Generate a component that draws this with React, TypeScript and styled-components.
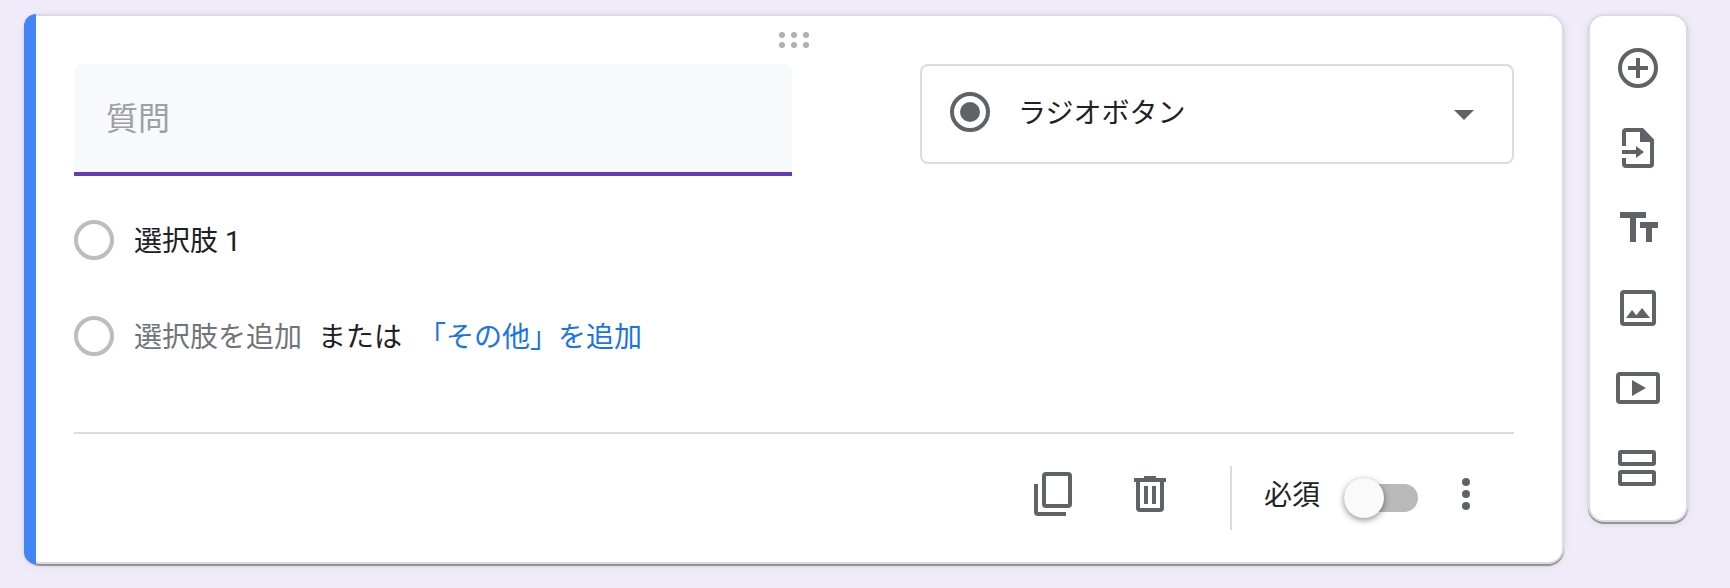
import React, { useState } from "react";
import styled, { createGlobalStyle } from "styled-components";

const ink = "#202124";
const iconGrey = "#5f6368";
const line = "#dadce0";
const fontStack = 'Roboto, "Noto Sans CJK JP", sans-serif';

const GlobalStyle = createGlobalStyle`
  *, *::before, *::after { box-sizing: border-box; }
  body {
    margin: 0;
    min-height: 100vh;
    background: #efebf8;
    color: ${ink};
    font-family: ${fontStack};
    font-size: 28px;
    line-height: 44px;
  }
  input, select, button { font: inherit; color: inherit; margin: 0; }
`;

const Page = styled.main`
  display: flex;
  align-items: flex-start;
  gap: 24px;
  padding: 14px 42px 24px 24px;
`;

const Surface = styled.div`
  background: #fff;
  border: 2px solid ${line};
  border-radius: 16px;
  box-shadow: 0 2px 1px rgba(0, 0, 0, 0.36), 0 2px 8px rgba(0, 0, 0, 0.08);
`;

const Card = styled(Surface)`
  position: relative;
  flex: 1;
  min-width: 0;
  border-left: 0;
  padding: 16px 48px 32px 50px;

  &::before {
    content: "";
    position: absolute;
    top: -2px;
    bottom: -2px;
    left: 0;
    width: 12px;
    border-radius: 12px 0 0 12px;
    background: #4285f4;
  }
`;

const PlainButton = styled.button`
  display: flex;
  align-items: center;
  justify-content: center;
  padding: 0;
  border: 0;
  background: none;
  cursor: pointer;
`;

const DragHandle = styled(PlainButton)`
  margin: 0 auto 16px;
  color: #b0b0b0;
  cursor: move;
`;

const QuestionRow = styled.div`
  display: grid;
  grid-template-columns: 718fr 594fr;
  align-items: start;
  gap: 128px;
`;

const QuestionInput = styled.input`
  width: 100%;
  min-width: 0;
  height: 112px;
  padding: 2px 32px 0;
  border: 0;
  border-bottom: 4px solid #673ab7;
  border-radius: 8px 8px 0 0;
  background: #f8f9fa;
  font-size: 32px;
  outline: none;

  &::placeholder { color: #9aa0a6; opacity: 1; }
`;

const TypePicker = styled.div`
  display: grid;
  align-items: center;

  > * { grid-area: 1 / 1; }
  > svg { pointer-events: none; color: ${iconGrey}; }
`;

const TypeSelect = styled.select`
  appearance: none;
  width: 100%;
  height: 100px;
  padding: 0 72px 0 96px;
  border: 2px solid ${line};
  border-radius: 8px;
  background: #fff;
`;

const TypeIcon = styled.svg`
  margin-left: 26px;
`;

const Arrow = styled.svg`
  justify-self: end;
  margin-right: 26px;
`;

const Options = styled.div`
  display: flex;
  flex-direction: column;
  gap: 52px;
  padding: 44px 0 72px;
`;

const OptionRow = styled.div`
  display: flex;
  align-items: flex-start;
  gap: 20px;
`;

const Radio = styled.input`
  appearance: none;
  flex: none;
  width: 40px;
  height: 40px;
  border: 4px solid #bdbdbd;
  border-radius: 50%;
`;

const AddGroup = styled.div`
  display: flex;
  align-items: center;
  gap: 16px;
`;

const AddButton = styled(PlainButton)<{ $tone: string }>`
  color: ${(p) => p.$tone};
`;

const Footer = styled.div`
  display: flex;
  align-items: flex-start;
  justify-content: flex-end;
  border-top: 2px solid ${line};
  padding: 32px 24px 0 0;
`;

const FooterButton = styled(PlainButton)`
  height: 56px;
  color: ${iconGrey};
`;

const CardActions = styled.div`
  display: flex;
  gap: 48px;
`;

const Separator = styled.div`
  width: 2px;
  height: 64px;
  margin: 0 32px 0 56px;
  background: ${line};
`;

const RequiredLabel = styled.label`
  display: flex;
  align-items: flex-start;
  gap: 24px;
  margin-right: 24px;
  line-height: 60px;
`;

const Switch = styled.input`
  appearance: none;
  display: flex;
  align-items: center;
  width: 74px;
  height: 28px;
  margin: 18px 0;
  border-radius: 14px;
  background: #b9b9b9;
  cursor: pointer;

  &::before {
    content: "";
    width: 40px;
    height: 40px;
    border-radius: 50%;
    background: #fafafa;
    box-shadow: 0 2px 6px rgba(0, 0, 0, 0.45);
  }

  &:checked { background: #b39ddb; }
  &:checked::before { margin-left: 34px; background: #673ab7; }
`;

const Toolbar = styled(Surface)`
  display: flex;
  flex-direction: column;
  align-items: center;
  gap: 32px;
  width: 100px;
  padding: 28px 0;
`;

const ToolButton = styled(PlainButton)`
  color: ${iconGrey};
`;

const Icon = ({ children }: { children: React.ReactNode }) => (
  <svg width="48" height="48" viewBox="0 0 48 48" fill="currentColor" aria-hidden="true">
    {children}
  </svg>
);

const outline = { fill: "none", stroke: "currentColor", strokeWidth: 4 };

const tools = [
  {
    label: "質問を追加",
    icon: (
      <>
        <circle cx="24" cy="24" r="18" {...outline} />
        <path d="M22 14h4v8h8v4h-8v8h-4v-8h-8v-4h8z" />
      </>
    ),
  },
  {
    label: "質問をインポート",
    icon: (
      <>
        <path d="M12 4H29L40 15.500V40a4 4 0 0 1-4 4H12a4 4 0 0 1-4-4V34h4v6H36V18H26V8H12V22H8V8a4 4 0 0 1 4-4z" />
        <path d="M8 26h14v-4l8 6-8 6v-4H8z" />
      </>
    ),
  },
  {
    label: "タイトルと説明を追加",
    icon: <path d="M6 8h26v6H22v24h-6V14H6zM26 18h18v6h-6v14h-6V24h-6z" />,
  },
  {
    label: "画像を追加",
    icon: (
      <>
        <rect x="8" y="8" width="32" height="32" rx="2" {...outline} />
        <path d="M12 34l6-8 4.400 5.300L28 24l8 10z" />
      </>
    ),
  },
  {
    label: "動画を追加",
    icon: (
      <>
        <rect x="4" y="10" width="40" height="28" rx="2" {...outline} />
        <path d="M18 16l14 8-14 8z" />
      </>
    ),
  },
  {
    label: "セクションを追加",
    icon: (
      <>
        <rect x="6" y="8" width="34" height="12" rx="1" {...outline} />
        <rect x="6" y="28" width="34" height="12" rx="1" {...outline} />
      </>
    ),
  },
];

export default function App() {
  const [required, setRequired] = useState(false);

  return (
    <>
      <GlobalStyle />
      <Page>
        <Card>
          <DragHandle aria-label="移動">
            <svg width="30" height="16" viewBox="0 0 30 16" fill="currentColor" aria-hidden="true">
              {[3, 15, 27].map((x) => (
                <React.Fragment key={x}>
                  <circle cx={x} cy="3" r="3" />
                  <circle cx={x} cy="13" r="3" />
                </React.Fragment>
              ))}
            </svg>
          </DragHandle>

          <QuestionRow>
            <QuestionInput type="text" placeholder="質問" aria-label="質問" />
            <TypePicker>
              <TypeSelect aria-label="質問の種類">
                <option>ラジオボタン</option>
              </TypeSelect>
              <TypeIcon width="48" height="48" viewBox="0 0 48 48" aria-hidden="true">
                <circle cx="24" cy="22" r="18" {...outline} />
                <circle cx="24" cy="22" r="10" fill="currentColor" />
              </TypeIcon>
              <Arrow width="48" height="48" viewBox="0 0 48 48" aria-hidden="true">
                <path d="M14 20h20L24 30z" fill="currentColor" />
              </Arrow>
            </TypePicker>
          </QuestionRow>

          <Options>
            <OptionRow>
              <Radio type="radio" id="option-1" name="option" disabled />
              <label htmlFor="option-1">選択肢 1</label>
            </OptionRow>
            <OptionRow>
              <Radio type="radio" name="option" aria-label="選択肢を追加" disabled />
              <AddGroup>
                <AddButton $tone="#70757a">選択肢を追加</AddButton>
                <span>または</span>
                <AddButton $tone="#1a73e8">「その他」を追加</AddButton>
              </AddGroup>
            </OptionRow>
          </Options>

          <Footer>
            <CardActions>
              <FooterButton aria-label="コピーを作成">
                <Icon>
                  <rect x="14" y="4" width="26" height="32" rx="2" {...outline} />
                  <path d="M4 14h4v28h28v4H8a4 4 0 0 1-4-4z" />
                </Icon>
              </FooterButton>
              <FooterButton aria-label="削除">
                <Icon>
                  <path d="M18 6h12v2h10v4h-2v26a4 4 0 0 1-4 4H14a4 4 0 0 1-4-4V12H8V8h10zM14 12v26h20V12z" fillRule="evenodd" />
                  <path d="M18 16h4v18h-4zM26 16h4v18h-4z" />
                </Icon>
              </FooterButton>
            </CardActions>
            <Separator />
            <RequiredLabel>
              必須
              <Switch
                type="checkbox"
                role="switch"
                checked={required}
                onChange={(e) => setRequired(e.target.checked)}
              />
            </RequiredLabel>
            <FooterButton aria-label="その他のオプション">
              <Icon>
                <circle cx="24" cy="12" r="4" />
                <circle cx="24" cy="24" r="4" />
                <circle cx="24" cy="36" r="4" />
              </Icon>
            </FooterButton>
          </Footer>
        </Card>

        <Toolbar role="toolbar" aria-label="追加">
          {tools.map((tool) => (
            <ToolButton key={tool.label} aria-label={tool.label}>
              <Icon>{tool.icon}</Icon>
            </ToolButton>
          ))}
        </Toolbar>
      </Page>
    </>
  );
}
